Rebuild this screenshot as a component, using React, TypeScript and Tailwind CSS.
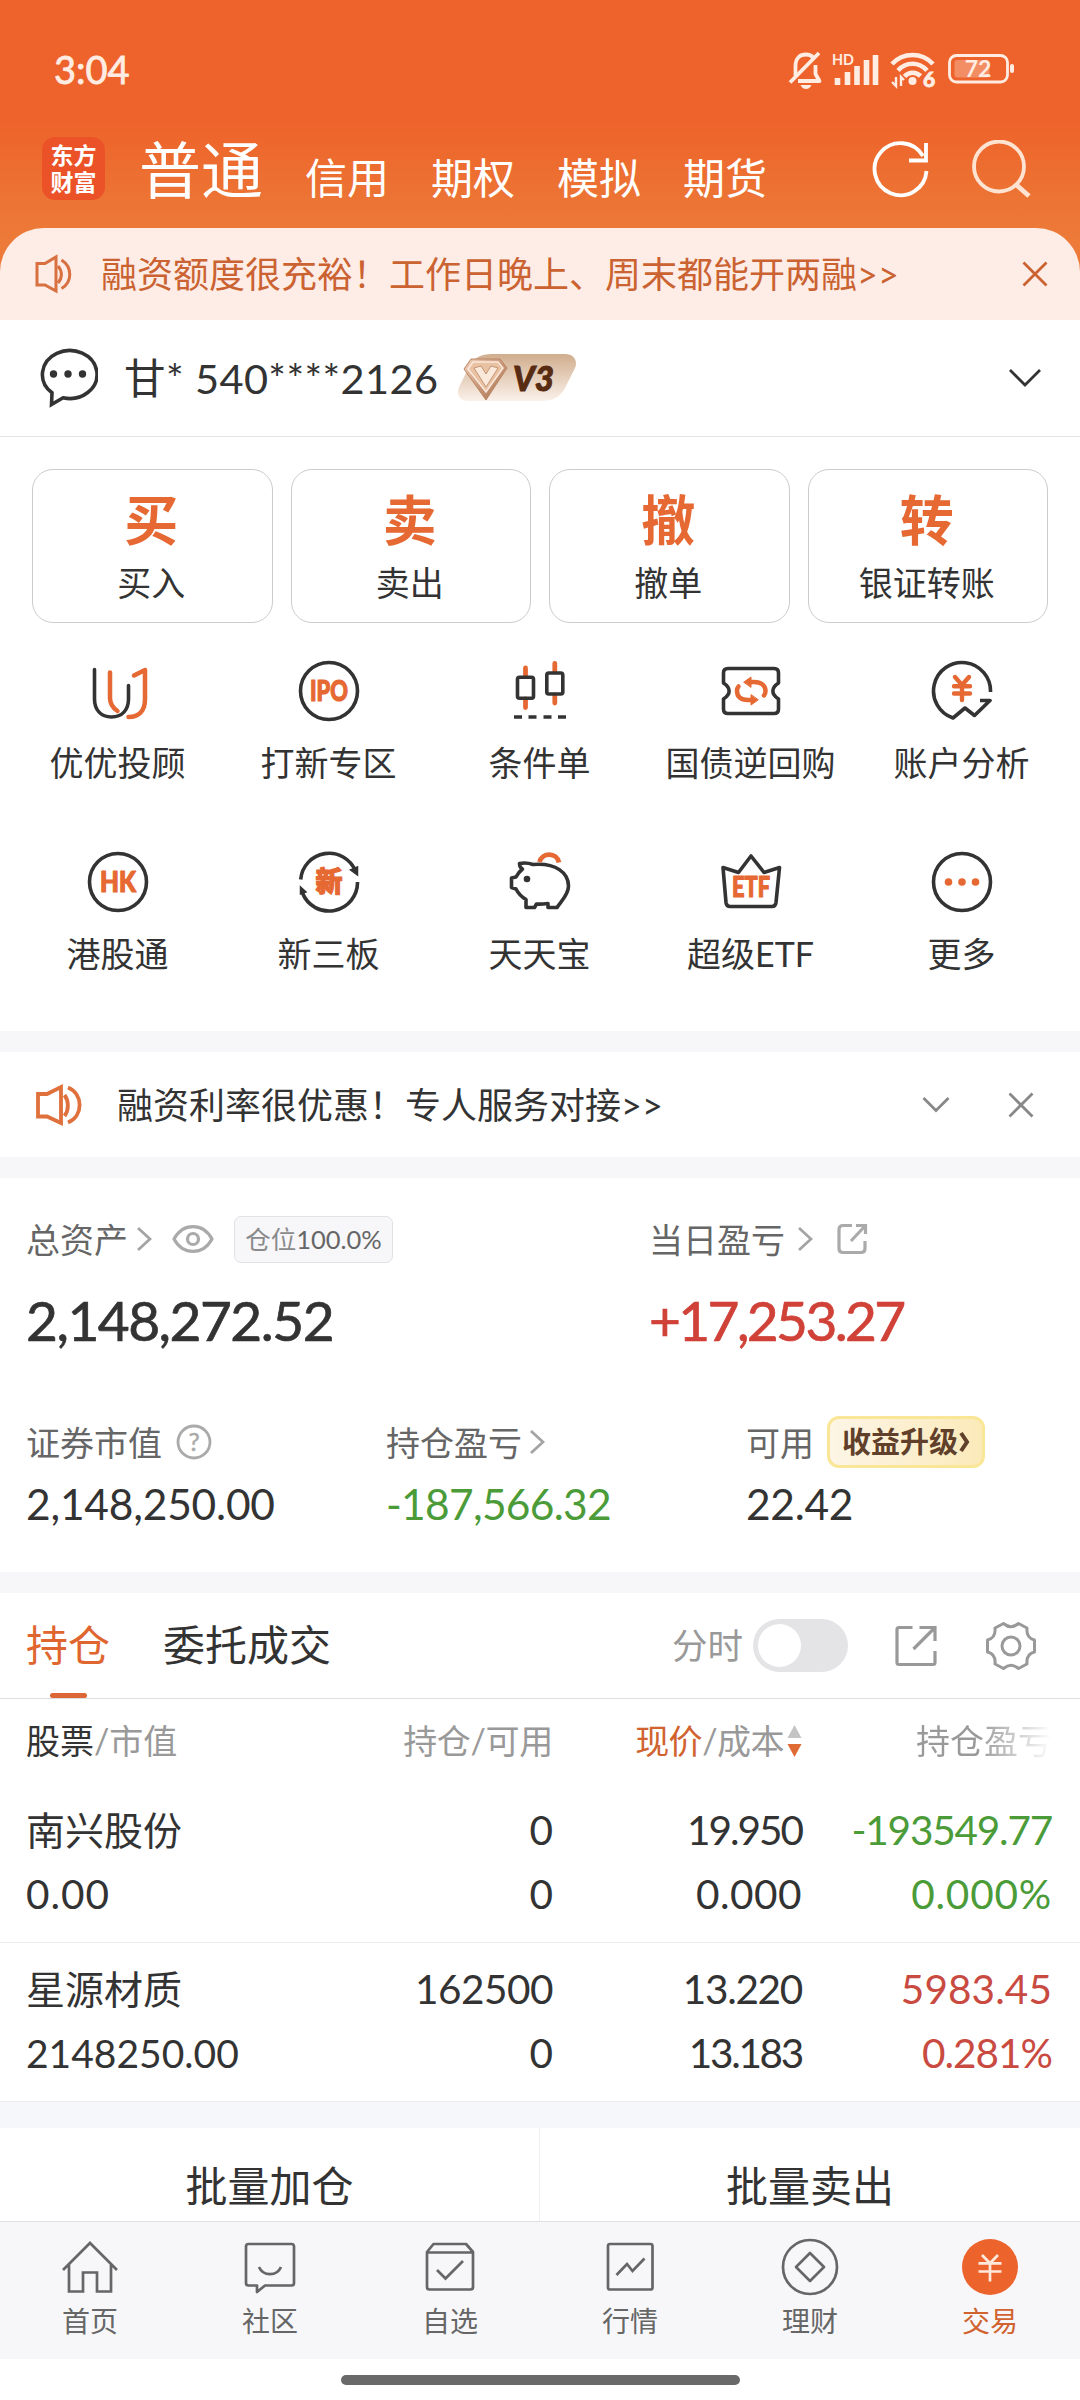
import React from "react";

const ORANGE = "#e66832";
const DARK = "#333333";

function Svg({
  children,
  width,
  height,
  viewBox,
  color = DARK,
  stroke = 3,
}: {
  children: React.ReactNode;
  width: number;
  height: number;
  viewBox?: string;
  color?: string;
  stroke?: number;
}) {
  return (
    <svg
      className="block shrink-0"
      width={width}
      height={height}
      viewBox={viewBox ?? `${-width / 2} ${-height / 2} ${width} ${height}`}
      fill="none"
      stroke={color}
      strokeWidth={stroke}
    >
      {children}
    </svg>
  );
}

function IconText({
  children,
  y,
  length,
  size = 28,
}: {
  children: string;
  y: number;
  length: number;
  size?: number;
}) {
  return (
    <text
      x={0}
      y={y}
      textAnchor="middle"
      textLength={length}
      lengthAdjust="spacingAndGlyphs"
      fontSize={size}
      fontWeight={900}
      fill={ORANGE}
      stroke={ORANGE}
      strokeWidth={1.2}
      strokeLinejoin="round"
    >
      {children}
    </text>
  );
}

function ChevronRight({ color = "#a4a4a4" }: { color?: string }) {
  return (
    <Svg width={16} height={26} color={color} stroke={2.8}>
      <path d="M-6 -11 L6 0 L-6 11" />
    </Svg>
  );
}

function StatusBar() {
  return (
    <div className="flex h-[122px] items-start justify-between pl-[54px] pr-[65px] pt-[49px] text-[#ffece2]">
      <span className="text-[38px] leading-[40px] [-webkit-text-stroke:0.8px_#ffece2]">3:04</span>
      <div className="flex h-[40px] items-center pt-[2px]">
        <Svg width={36} height={40} viewBox="0 0 36 40" color="#ffece2" stroke={3.8}>
          <path d="M7.500 26 V16 C7.500 8 12 4.500 18 4.500 C21 4.500 23.500 5.500 25 7.500" />
          <path d="M27.500 15 V24 L31.500 31 H10" strokeLinejoin="round" />
          <path d="M2 32.500 L31 3" />
          <path d="M12.500 35 H23.500 C22 38 20 39 18 39 S14 38 12.500 35 Z" fill="#ffece2" stroke="none" />
        </Svg>
        <div className="ml-[8px]">
          <Svg width={48} height={40} viewBox="0 0 48 40" color="#ffece2" stroke={5.6}>
            <text x="0" y="15" fontSize="15.500" fontWeight="700" fill="#ffece2" stroke="none" textLength="22" lengthAdjust="spacingAndGlyphs">
              HD
            </text>
            <path d="M5.500 35 V28 M15.500 35 V22 M25 35 V16 M34.500 35 V10 M43.500 35 V5" />
          </Svg>
        </div>
        <div className="ml-[10px]">
          <Svg width={54} height={42} viewBox="0 0 54 42" color="#ffece2" stroke={4.6}>
            <path d="M2 15 C13 3 32 3 43 15" />
            <path d="M8 21.500 C16 12.500 29 12.500 37 21.500" />
            <path d="M14.500 27.500 C19 22.500 26 22.500 30.500 27" />
            <circle cx="22.500" cy="32" r="4" fill="#ffece2" stroke="none" />
            <path d="M6 28 V37 L2 33 M11 37 V28 L14 31" strokeWidth={2.4} />
            <text x="33" y="38" fontSize="21" fontWeight="900" fill="#ffece2" stroke="#ffece2" strokeWidth="0.800">
              6
            </text>
          </Svg>
        </div>
        <div className="ml-[4px]">
          <Svg width={67} height={40} viewBox="0 0 67 40" color="#ffece2" stroke={2.8}>
            <rect x="1.500" y="5.500" width="58" height="26.500" rx="7" />
            <rect x="6.500" y="10" width="35" height="17.500" rx="3" fill="#f38d64" stroke="none" />
            <rect x="62" y="14" width="4" height="9" rx="2" fill="#ffece2" stroke="none" />
            <text x="30" y="27" textAnchor="middle" fontSize="23" fontWeight="700" fill="#ffece2" stroke="none">
              72
            </text>
          </Svg>
        </div>
      </div>
    </div>
  );
}

function TopTabs() {
  return (
    <div className="flex h-[106px] items-start pl-[42px] pr-[48px] text-white">
      <div className="mt-[15px] flex h-[63px] w-[63px] flex-col items-center justify-center rounded-[13px] bg-[#ec5228] text-[23px] font-bold leading-[27px]">
        <span>东方</span>
        <span>财富</span>
      </div>
      <span className="ml-[34px] mt-[17px] w-[124px] text-[62px] leading-[62px]">普通</span>
      <div className="ml-[42px] mt-[35px] flex gap-[42px] text-[42px] leading-[42px]">
        {["信用", "期权", "模拟", "期货"].map((t) => (
          <span key={t}>{t}</span>
        ))}
      </div>
      <div className="ml-auto mt-[18px] flex gap-[41px]">
        <Svg width={60} height={60} color="#ffffff" stroke={3.8}>
          <path d="M25.500 1 A26 26 0 1 1 22 -14" />
          <path d="M25 -27 V-9.500 H8" stroke="#ffffff" />
        </Svg>
        <Svg width={60} height={60} color="#ffe3d2" stroke={3.8}>
          <circle cx="-3" cy="-3.500" r="25" />
          <path d="M14.500 15 L27 26" strokeWidth={4.8} />
        </Svg>
      </div>
    </div>
  );
}

function TopNotice() {
  return (
    <div className="flex h-[92px] items-center rounded-t-[44px] bg-[#fdede6] pl-[35px] pr-[32px] text-[#cb6231]">
      <Svg width={38} height={40} color="#d8703f" stroke={3}>
        <path d="M-17 -10.500 H-9 L2 -17 V17 L-9 11 H-17 Z" />
        <path d="M4 -8 C8.500 -3 8.500 4 4 9 M7.500 -14 C18.500 -7 18.500 8 7.500 14.500" />
      </Svg>
      <span className="ml-[28px] text-[36px]">融资额度很充裕！工作日晚上、周末都能开两融&gt;&gt;</span>
      <div className="ml-auto">
        <Svg width={26} height={26} color="#cb6231" stroke={2.8}>
          <path d="M-11.500 -11.500 L11.500 11.500 M11.500 -11.500 L-11.500 11.500" />
        </Svg>
      </div>
    </div>
  );
}

function AccountRow() {
  return (
    <div className="flex h-[117px] items-center border-b border-[#e3e3e3] pl-[38px] pr-[38px]">
      <Svg width={60} height={60} stroke={3.6}>
        <path d="M-16 14.800 A27.300 24 0 1 1 -5 19.800 L-16.500 26.500 Z" strokeLinejoin="miter" />
        <g fill={DARK} stroke="none">
          <circle cx="-14.500" cy="-4" r="3.700" />
          <circle cx="0" cy="-4" r="3.700" />
          <circle cx="14.500" cy="-4" r="3.700" />
        </g>
      </Svg>
      <span className="ml-[26px] w-[332px] whitespace-nowrap text-[41.5px] tracking-[0.4px]">甘* 540****2126</span>
      <svg className="block" width="122" height="50" viewBox="0 0 122 50">
        <defs>
          <linearGradient id="vip" x1="0" y1="0" x2="0" y2="1">
            <stop offset="0" stopColor="#d0ad8d" />
            <stop offset="1" stopColor="#fbf1ea" />
          </linearGradient>
          <linearGradient id="gem" x1="0" y1="0" x2="1" y2="1">
            <stop offset="0" stopColor="#f3d3bb" />
            <stop offset="0.5" stopColor="#c9977a" />
            <stop offset="1" stopColor="#a87252" />
          </linearGradient>
        </defs>
        <path
          d="M36 1 H109 C118 1 122 8 119 15 L109 35 C104 44 97 48 86 48 H12 C4 48 0 42 3 34 L13 14 C18 4 26 1 36 1 Z"
          fill="url(#vip)"
        />
        <path d="M15 6 H44 L51 15 L30 47 L8 16 Z" fill="url(#gem)" stroke="#b98563" strokeWidth="1" />
        <path d="M17 9 H42 L47 15 L30 39 L12 16 Z" fill="#e9c2a4" stroke="#fbe9dc" strokeWidth="1.500" />
        <path d="M18 15 L30 34 L42 15 L35 13 L30 21 L25 13 Z" fill="#fbe9dc" stroke="#b98563" strokeWidth="0.800" />
        <text
          x="57"
          y="37.500"
          fontSize="35"
          fontWeight="900"
          fontStyle="italic"
          fill="#582c12"
          stroke="#582c12"
          strokeWidth="1"
          textLength="41"
          lengthAdjust="spacingAndGlyphs"
        >
          V3
        </text>
      </svg>
      <div className="ml-auto">
        <Svg width={34} height={20} stroke={2.8}>
          <path d="M-15 -8 L0 7 L15 -8" />
        </Svg>
      </div>
    </div>
  );
}

function TradeCards() {
  const cards = [
    ["买", "买入"],
    ["卖", "卖出"],
    ["撤", "撤单"],
    ["转", "银证转账"],
  ];
  return (
    <div className="grid grid-cols-4 gap-[18px] px-8 pt-8">
      {cards.map(([mark, label]) => (
        <div key={label} className="flex h-[154px] flex-col items-center rounded-[21px] border border-[#cccccc] pr-[2px] pt-[23px]">
          <span className="text-[54px] font-bold leading-[56px] text-[#e66832]">{mark}</span>
          <span className="mt-[14px] text-[34px] leading-[40px]">{label}</span>
        </div>
      ))}
    </div>
  );
}

const entries: { label: string; icon: React.ReactNode }[] = [
  {
    label: "优优投顾",
    icon: (
      <g strokeLinecap="round" strokeLinejoin="round">
        <path d="M-23.500 -21.500 V8 C-23.500 19 -17 26 -6.500 26 S10.500 19 10.500 8 V-5.500" />
        <path d="M-8 -18.500 V7 C-8 13 -5 17 -0.500 20" stroke={ORANGE} strokeWidth={4.5} />
        <path d="M16 -15.500 L27 -21 V8 C27 20 21 26 10.500 26" stroke={ORANGE} strokeWidth={4.5} />
      </g>
    ),
  },
  {
    label: "打新专区",
    icon: (
      <>
        <circle r="28.500" />
        <IconText y={9.5} length={38}>
          IPO
        </IconText>
      </>
    ),
  },
  {
    label: "条件单",
    icon: (
      <>
        <path
          d="M-14.500 -23 V-15 M-14.500 8 V16.500 M14.800 -27.500 V-19 M14.800 4 V12"
          stroke={ORANGE}
          strokeWidth={4.8}
          strokeLinecap="round"
        />
        <rect x="-22.500" y="-13.800" width="16" height="21" rx="2" />
        <rect x="6.800" y="-18" width="16" height="21" rx="2" />
        <path d="M-26 26 H-18 M-11.500 26 H-3.500 M3.500 26 H11.500 M18 26 H26" />
      </>
    ),
  },
  {
    label: "国债逆回购",
    icon: (
      <>
        <path
          d="M-23 -22.500 H23 Q27.500 -22.500 27.500 -18 V-8 C20 -3 20 3 27.500 8 V18 Q27.500 22.500 23 22.500 H-23 Q-27.500 22.500 -27.500 18 V8 C-20 3 -20 -3 -27.500 -8 V-18 Q-27.500 -22.500 -23 -22.500 Z"
          strokeLinejoin="round"
        />
        <g stroke={ORANGE} strokeWidth={4.5} strokeLinecap="round">
          <path d="M-2 -9 H3 C11 -9 14.500 -5 14.500 0 C14.500 2 14 3.500 13 4.500" />
          <path d="M2 9 H-3 C-11 9 -14 5 -14 0 C-14 -2 -13.500 -3.500 -12.500 -4.500" />
          <path d="M-7 -9 L0 -14 V-4 Z M7 9 L0 14 V4 Z" fill={ORANGE} strokeWidth={1} />
        </g>
      </>
    ),
  },
  {
    label: "账户分析",
    icon: (
      <>
        <path d="M28.500 1 A28.500 28.500 0 1 0 -9 27 L3 17 L12.500 24.500 L28 9.500 H18" strokeLinejoin="round" />
        <path
          d="M-7 -14 L0 -6 L7 -14 M0 -6 V9 M-8 -4.700 H8 M-8 2.500 H8"
          stroke={ORANGE}
          strokeWidth={4.4}
          strokeLinecap="round"
        />
      </>
    ),
  },
  {
    label: "港股通",
    icon: (
      <>
        <circle r="28.500" />
        <IconText y={9.5} length={36}>
          HK
        </IconText>
      </>
    ),
  },
  {
    label: "新三板",
    icon: (
      <>
        <path d="M-28.300 -2.500 A28.500 28.500 0 0 1 26.500 -11" />
        <path d="M28.500 0 A28.500 28.500 0 0 1 -26.500 11" />
        <path d="M28.500 -7 L28.500 -15 L21.500 -12 Z M-28.500 12 L-28.500 5 L-23 10 Z" fill={DARK} strokeWidth={1.5} />
        <IconText y={9.5} length={27}>
          新
        </IconText>
      </>
    ),
  },
  {
    label: "天天宝",
    icon: (
      <>
        <path
          d="M-20.500 -18.500 C-16 -19.500 -11 -19 -7 -17.500 C16 -19.500 28.500 -9 28.500 4 C28.500 13 21 19 17 25.500 H8 V21.500 C4 22 0 22.500 -3.500 22 L-5.500 25.500 H-14 V17.500 C-19 14.500 -22 11 -24 7 L-28.500 5.500 V-4 L-24 -5 C-22 -9 -20 -11 -17.500 -13 C-19.500 -14 -20.500 -16 -20.500 -18.500 Z"
          strokeLinejoin="round"
        />
        <circle cx="-13" cy="-3" r="3.300" fill={DARK} stroke="none" />
        <path d="M-0.500 -20 C2 -30 17 -30 19 -19.500" stroke={ORANGE} strokeWidth={4.8} />
      </>
    ),
  },
  {
    label: "超级ETF",
    icon: (
      <>
        <path
          d="M-28 -14.500 L-12.500 -9.500 L0 -26 L13 -9.500 L28.500 -14.500 L25 20.500 Q24.500 24.500 21 24.500 H-21 Q-24.500 24.500 -25 20.500 Z"
          strokeLinejoin="round"
        />
        <IconText y={15} length={38}>
          ETF
        </IconText>
      </>
    ),
  },
  {
    label: "更多",
    icon: (
      <>
        <circle r="28.500" />
        <g fill={ORANGE} stroke="none">
          <circle cx="-13.500" r="3.800" />
          <circle r="3.800" />
          <circle cx="13.500" r="3.800" />
        </g>
      </>
    ),
  },
];

function EntryGrid() {
  return (
    <div className="grid grid-cols-5 gap-y-[29px] pl-[12px] pr-[13px] pt-[36px]">
      {entries.map(({ label, icon }) => (
        <div key={label} className="flex h-[162px] flex-col items-center">
          <Svg width={64} height={64} stroke={3.6}>
            {icon}
          </Svg>
          <span className="mt-[20px] text-[34px] leading-[40px]">{label}</span>
        </div>
      ))}
    </div>
  );
}

function Notice() {
  return (
    <div className="flex h-[105px] items-center bg-white pl-[35px] pr-[46px]">
      <Svg width={48} height={44} color="#e0703c" stroke={3.8}>
        <path d="M-21 -11 H-12 L2 -18 V18 L-12 11.500 H-21 Z" />
        <path d="M5.500 -10 C10 -4 10 5 5.500 11 M9 -17.500 C24.500 -11 24.500 11 9 17.500" />
      </Svg>
      <span className="ml-[34px] text-[36px]">融资利率很优惠！专人服务对接&gt;&gt;</span>
      <div className="ml-auto flex items-center gap-[58px]">
        <Svg width={28} height={20} color="#888888" stroke={2.8}>
          <path d="M-12.500 -7 L0 5.500 L12.500 -7" />
        </Svg>
        <Svg width={26} height={26} color="#888888" stroke={2.8}>
          <path d="M-11.500 -11.500 L11.500 11.500 M11.500 -11.500 L-11.500 11.500" />
        </Svg>
      </div>
    </div>
  );
}

function Assets() {
  return (
    <div className="h-[394px] bg-white pl-[26px] pt-[37px] text-[34px]">
      <div className="flex">
        <div className="w-[623px]">
          <div className="flex h-[48px] items-center text-[#666666]">
            总资产
            <div className="ml-[8px]">
              <ChevronRight />
            </div>
            <div className="ml-[20px]">
              <Svg width={42} height={30} color="#aaaaaa" stroke={3.2}>
                <path d="M-19 0 C-10 -16.500 10 -16.500 19 0 C10 16.500 -10 16.500 -19 0 Z" />
                <circle r="5.500" />
              </Svg>
            </div>
            <div className="ml-[20px] flex h-[47px] w-[159px] items-center justify-center rounded-[7px] border border-[#e2e2e4] bg-[#f7f7fa] text-[25.5px]">
              <span className="text-[#8a8a8a]">仓位</span>100.0%
            </div>
          </div>
          <p className="mt-[25px] text-[55px] leading-[64px] tracking-[-1.5px] text-[#333333] [-webkit-text-stroke:0.7px_#333333]">
            2,148,272.52
          </p>
        </div>
        <div>
          <div className="flex h-[48px] items-center text-[#666666]">
            当日盈亏
            <div className="ml-[12px]">
              <ChevronRight />
            </div>
            <div className="ml-[23px]">
              <Svg width={32} height={32} color="#aaaaaa" stroke={3.2}>
                <path d="M0 -13.500 H-9 Q-13 -13.500 -13 -9.500 V9.500 Q-13 13.500 -9 13.500 H9 Q13 13.500 13 9.500 V2" />
                <path d="M-1 2 L13 -13 M4 -13.500 H13.500 V-5" />
              </Svg>
            </div>
          </div>
          <p className="mt-[25px] text-[55px] leading-[64px] tracking-[-2.6px] text-[#d04138] [-webkit-text-stroke:0.7px_#d04138]">
            +17,253.27
          </p>
        </div>
      </div>
      <div className="mt-[62px] flex">
        <div className="w-[360px]">
          <div className="flex h-[56px] items-center text-[#666666]">
            证券市值
            <div className="ml-[14px]">
              <Svg width={36} height={36} color="#aaaaaa" stroke={2.8}>
                <circle r="16" />
                <text x="0" y="9" textAnchor="middle" fontSize="25" fill="#aaaaaa" stroke="#aaaaaa" strokeWidth="0.500">
                  ?
                </text>
              </Svg>
            </div>
          </div>
          <p className="mt-[8px] text-[42.5px] leading-[52px] tracking-[-0.2px]">2,148,250.00</p>
        </div>
        <div className="w-[360px]">
          <div className="flex h-[56px] items-center text-[#666666]">
            持仓盈亏
            <div className="ml-[7px]">
              <ChevronRight />
            </div>
          </div>
          <p className="mt-[8px] text-[42.5px] leading-[52px] tracking-[-0.7px] text-[#4b9b39]">-187,566.32</p>
        </div>
        <div>
          <div className="flex h-[56px] items-center text-[#666666]">
            可用
            <div className="ml-[13px] flex h-[52px] w-[158px] items-center justify-center rounded-[12px] border-[3px] border-[#f9e696] bg-linear-to-r from-[#fdf5e6] to-[#fbeab9] text-[29px] font-bold text-[#60402a]">
              收益升级
              <Svg width={12} height={24} color="#60402a" stroke={4}>
                <path d="M-3 -9 L3 0 L-3 9" />
              </Svg>
            </div>
          </div>
          <p className="mt-[8px] text-[42.5px] leading-[52px] tracking-[-0.3px]">22.42</p>
        </div>
      </div>
    </div>
  );
}

function HoldingTabs() {
  return (
    <div className="flex h-[106px] items-stretch border-b border-[#dddddd] bg-white pl-[26px] pr-[43px]">
      <div className="relative flex items-center pb-px text-[42px] text-[#e0662f]">
        持仓
        <span className="absolute bottom-0 left-[24px] h-[5px] w-[37px] rounded-full bg-[#dd6636]" />
      </div>
      <div className="ml-[53px] flex items-center pb-px text-[42px]">委托成交</div>
      <div className="ml-auto flex items-center">
        <span className="text-[35.5px] text-[#999999]">分时</span>
        <div className="ml-[10px] flex h-[53px] w-[95px] items-center rounded-full bg-[#e4e4e6] pl-[5px]">
          <span className="h-[43px] w-[43px] rounded-full bg-white" />
        </div>
        <div className="ml-[46px]">
          <Svg width={44} height={44} color="#999999" stroke={3.2}>
            <path d="M-3.500 -18.500 H-17 Q-19 -18.500 -19 -16.500 V16.500 Q-19 18.500 -17 18.500 H17 Q19 18.500 19 16.500 V5" />
            <path d="M3.500 -18.500 H19 V-5 M19 -18.500 L-2.500 3" />
          </Svg>
        </div>
        <div className="ml-[47px]">
          <Svg width={52} height={52} color="#999999" stroke={3}>
            <path
              d="M-7.500 -22.500 Q0 -16 7.500 -22.500 L16 -18 Q15 -8 23.500 -6 V6 Q15 8 16 18 L7.500 22.500 Q0 16 -7.500 22.500 L-16 18 Q-15 8 -23.500 6 V-6 Q-15 -8 -16 -18 Z"
              strokeLinejoin="round"
            />
            <circle r="9" />
          </Svg>
        </div>
      </div>
    </div>
  );
}

const cols = "grid grid-cols-[301px_226px_249px_250px] pl-[26px]";

type Cell = { text: string; className?: string };

const holdings: { top: Cell[]; bottom: Cell[]; color: string }[] = [
  {
    top: [
      { text: "南兴股份" },
      { text: "0" },
      { text: "19.950", className: "tracking-[-2px]" },
      { text: "-193549.77", className: "tracking-[-1.2px]" },
    ],
    bottom: [
      { text: "0.00", className: "tracking-[1px]" },
      { text: "0" },
      { text: "0.000", className: "tracking-[0.5px]" },
      { text: "0.000%", className: "tracking-[0.8px]" },
    ],
    color: "text-[#4b9b39]",
  },
  {
    top: [
      { text: "星源材质" },
      { text: "162500", className: "tracking-[-0.5px]" },
      { text: "13.220", className: "tracking-[-1.3px]" },
      { text: "5983.45", className: "tracking-[0.1px]" },
    ],
    bottom: [
      { text: "2148250.00" },
      { text: "0" },
      { text: "13.183", className: "tracking-[-2.3px]" },
      { text: "0.281%", className: "tracking-[-1px]" },
    ],
    color: "text-[#c94a41]",
  },
];

function HoldingLine({ cells, color }: { cells: Cell[]; color: string }) {
  const [name, amount, price, profit] = cells;
  return (
    <div className={`${cols} h-[64px] items-center text-right text-[40.5px]`}>
      <span className={`text-left ${name.className ?? "text-[39px]"}`}>{name.text}</span>
      <span className={amount.className}>{amount.text}</span>
      <span className={price.className}>{price.text}</span>
      <span className={`${color} -ml-6 whitespace-nowrap ${profit.className}`}>{profit.text}</span>
    </div>
  );
}

function Holdings() {
  return (
    <div className="bg-white">
      <div className={`${cols} h-[84px] items-center pb-[2px] text-right text-[34px] text-[#999999]`}>
        <span className="text-left">
          <span className="text-[#333333]">股票</span>/市值
        </span>
        <span className="tracking-[-0.3px]">持仓/可用</span>
        <span className="flex items-center justify-end tracking-[-0.5px]">
          <span className="text-[#d0632f]">现价</span>/成本
          <span className="ml-[3px] mt-[2px]">
            <Svg width={15} height={32}>
              <path d="M-7 -3 L0 -16 L7 -3 Z" fill="#c4c4c4" stroke="none" />
              <path d="M-7 3 L0 16 L7 3 Z" fill="#df6a34" stroke="none" />
            </Svg>
          </span>
        </span>
        <span className="bg-linear-to-r from-[#999999] from-70% to-[#ffffff] bg-clip-text text-transparent">持仓盈亏</span>
      </div>
      {holdings.map((h, i) => (
        <div key={h.top[0].text} className={`border-b border-[#ececee] pb-[16px] ${i === 0 ? "pt-[15px]" : "pt-[14px]"}`}>
          <HoldingLine cells={h.top} color={h.color} />
          <HoldingLine cells={h.bottom} color={h.color} />
        </div>
      ))}
    </div>
  );
}

function BatchActions() {
  return (
    <div className="grid h-[93px] grid-cols-2 bg-white text-center text-[42px] leading-[60px]">
      <span className="border-r border-[#eeeeee] pt-[28px]">批量加仓</span>
      <span className="pt-[28px]">批量卖出</span>
    </div>
  );
}

const tabs: { label: string; icon: React.ReactNode }[] = [
  {
    label: "首页",
    icon: <path d="M-27 3 L0 -24 L27 3 M-21 -3 V24.500 H-7 V5.500 H7 V24.500 H21 V-3" />,
  },
  {
    label: "社区",
    icon: (
      <>
        <path
          d="M-21.500 -23 H21.500 Q24 -23 24 -20.500 V16 Q24 18.500 21.500 18.500 H-5 L-13 25 V18.500 H-21.500 Q-24 18.500 -24 16 V-20.500 Q-24 -23 -21.500 -23 Z"
          strokeLinejoin="round"
        />
        <path d="M-11 0 C-7 9.500 7 9.500 11 0" />
      </>
    ),
  },
  {
    label: "自选",
    icon: (
      <>
        <path
          d="M-23 -15 L-16.500 -23 H16 L23 -15 V20 Q23 22.500 20.500 22.500 H-20.500 Q-23 22.500 -23 20 Z M-23 -14.500 H23"
          strokeLinejoin="round"
        />
        <path d="M-13 3 L-4.500 11.500 L13 -6" />
      </>
    ),
  },
  {
    label: "行情",
    icon: (
      <>
        <rect x="-22" y="-23" width="44.500" height="45.500" rx="2" />
        <path d="M-13.500 8 L-3 -3 L2.500 4 L14.500 -8.500" />
      </>
    ),
  },
  {
    label: "理财",
    icon: (
      <>
        <circle r="27" />
        <path d="M0 -14 L14 0 L0 14 L-14 0 Z" strokeLinejoin="round" />
      </>
    ),
  },
  {
    label: "交易",
    icon: (
      <>
        <circle r="28" fill="#ec632b" stroke="none" />
        <path d="M-8 -12 L0 -3.700 L8 -12 M0 -3.700 V14.500 M-11.500 -3.700 H11.500 M-11.500 4.500 H11.500" stroke="#ffe9dc" />
      </>
    ),
  },
];

function BottomNav() {
  return (
    <div className="grid h-[138px] grid-cols-6 border-t border-[#e0e0e2] bg-[#f7f7fa] pt-[16px]">
      {tabs.map(({ label, icon }, i) => (
        <div
          key={label}
          className={`flex flex-col items-center text-[28px] ${i === 5 ? "text-[#d0632f]" : "text-[#666666]"}`}
        >
          <Svg width={58} height={58} color="#666666" stroke={2.7}>
            {icon}
          </Svg>
          <span className="mt-[8px] leading-[34px]">{label}</span>
        </div>
      ))}
    </div>
  );
}

export default function App() {
  return (
    <div className="flex h-[2400px] w-[1080px] flex-col overflow-hidden bg-white font-['Lato','Noto_Sans_CJK_SC',sans-serif] text-[#333333]">
      <div className="bg-[linear-gradient(180deg,#ee632b_0px,#ee632b_122px,#ec7434_200px,#ed7a38_240px)]">
        <StatusBar />
        <TopTabs />
        <TopNotice />
      </div>
      <AccountRow />
      <div className="h-[594px]">
        <TradeCards />
        <EntryGrid />
      </div>
      <div className="flex flex-col gap-[21px] bg-[#f7f7fa] py-[21px]">
        <Notice />
        <Assets />
      </div>
      <HoldingTabs />
      <Holdings />
      <div className="h-[26px] bg-[#f6f7fa]" />
      <BatchActions />
      <BottomNav />
      <div className="flex grow justify-center bg-white pt-[16px]">
        <span className="h-[10px] w-[399px] rounded-full bg-[#696969]" />
      </div>
    </div>
  );
}
